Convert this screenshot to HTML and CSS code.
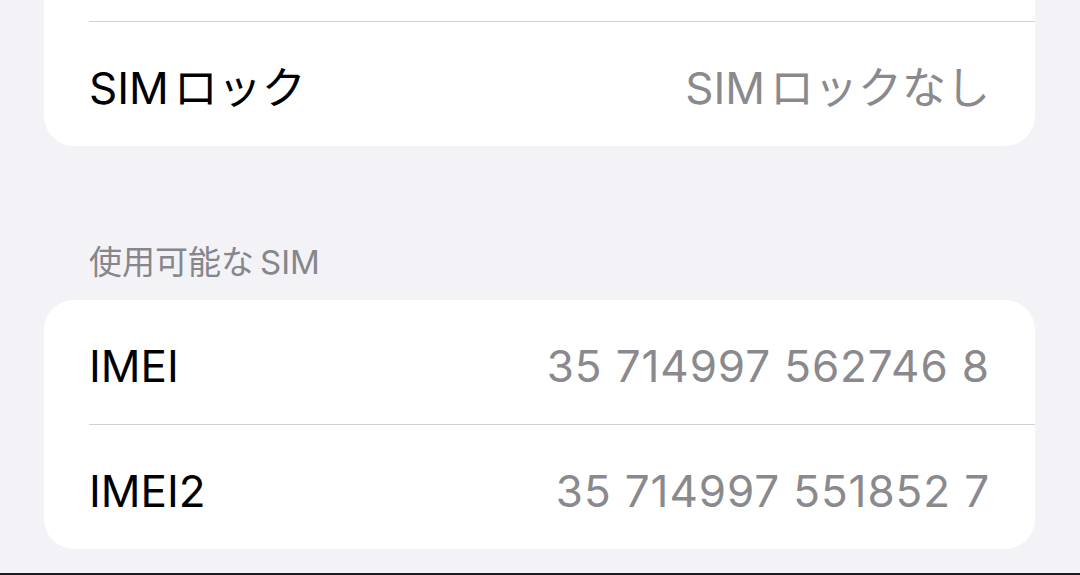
FILE: index.html
```html
<!DOCTYPE html>
<html lang="ja">
<head>
    <meta charset="UTF-8">
    <meta name="viewport" content="width=device-width, initial-scale=1.0">
    <title>情報</title>
    <link rel="stylesheet" href="styles.css">
</head>
<body>

    <div class="page">
        <!-- group continues from the rows above -->
        <div class="card card-continued">
            <div class="row">
                <span class="label"><span class="lat-before">SIM</span>ロック</span>
                <span class="value"><span class="lat-before">SIM</span>ロックなし</span>
            </div>
        </div>

        <h2 class="section-title">使用可能な<span class="lat-after">SIM</span></h2>
        <div class="card">
            <div class="row">
                <span class="label">IMEI</span>
                <span class="value number">35 714997 562746 8</span>
            </div>
            <div class="row">
                <span class="label">IMEI2</span>
                <span class="value number">35 714997 551852 7</span>
            </div>
        </div>
    </div>

    <div class="bottom-edge"></div>

</body>
</html>
```

FILE: styles.css
```css
html, body {
    height: 100%;
}
body {
    margin: 0;
    background-color: #f2f2f7; /* grouped background */
    font-family: 'Inter', 'Noto Sans CJK JP', sans-serif;
    color: #000;
    display: flex;
    flex-direction: column;
    overflow: hidden;
}
.page {
    padding: 0 45px 0 44px;
}
.card {
    background-color: #ffffff;
    border-radius: 30px;
    overflow: hidden;
}
.card-continued {
    border-top-left-radius: 0;
    border-top-right-radius: 0;
    padding-top: 21px;
}
.card-continued .row {
    border-top: 1px solid #d1d1d6;
    height: 125px;
}
.row {
    height: 124px;
    margin-left: 45px;
    padding: 7px 45px 0 0;
    display: flex;
    align-items: center;
    justify-content: space-between;
    box-sizing: border-box;
    font-size: 44px;
    line-height: 52px;
}
.row + .row {
    border-top: 1px solid #d1d1d6;
    height: 125px;
}
.label {
    color: #000;
}
.value {
    color: #8a8a8e;
}
.number {
    letter-spacing: 0.9px;
}
/* small gap between latin and kana, like the system text */
.lat-before {
    margin-right: 5px;
}
.lat-after {
    margin-left: 6px;
}
.section-title {
    margin: 96px 0 0 45px;
    padding-bottom: 18px;
    font-size: 33px;
    line-height: 40px;
    font-weight: 400;
    color: #86868b;
}
.bottom-edge {
    margin-top: auto;
    height: 2px;
    background-color: #1c1c1e;
}
```
